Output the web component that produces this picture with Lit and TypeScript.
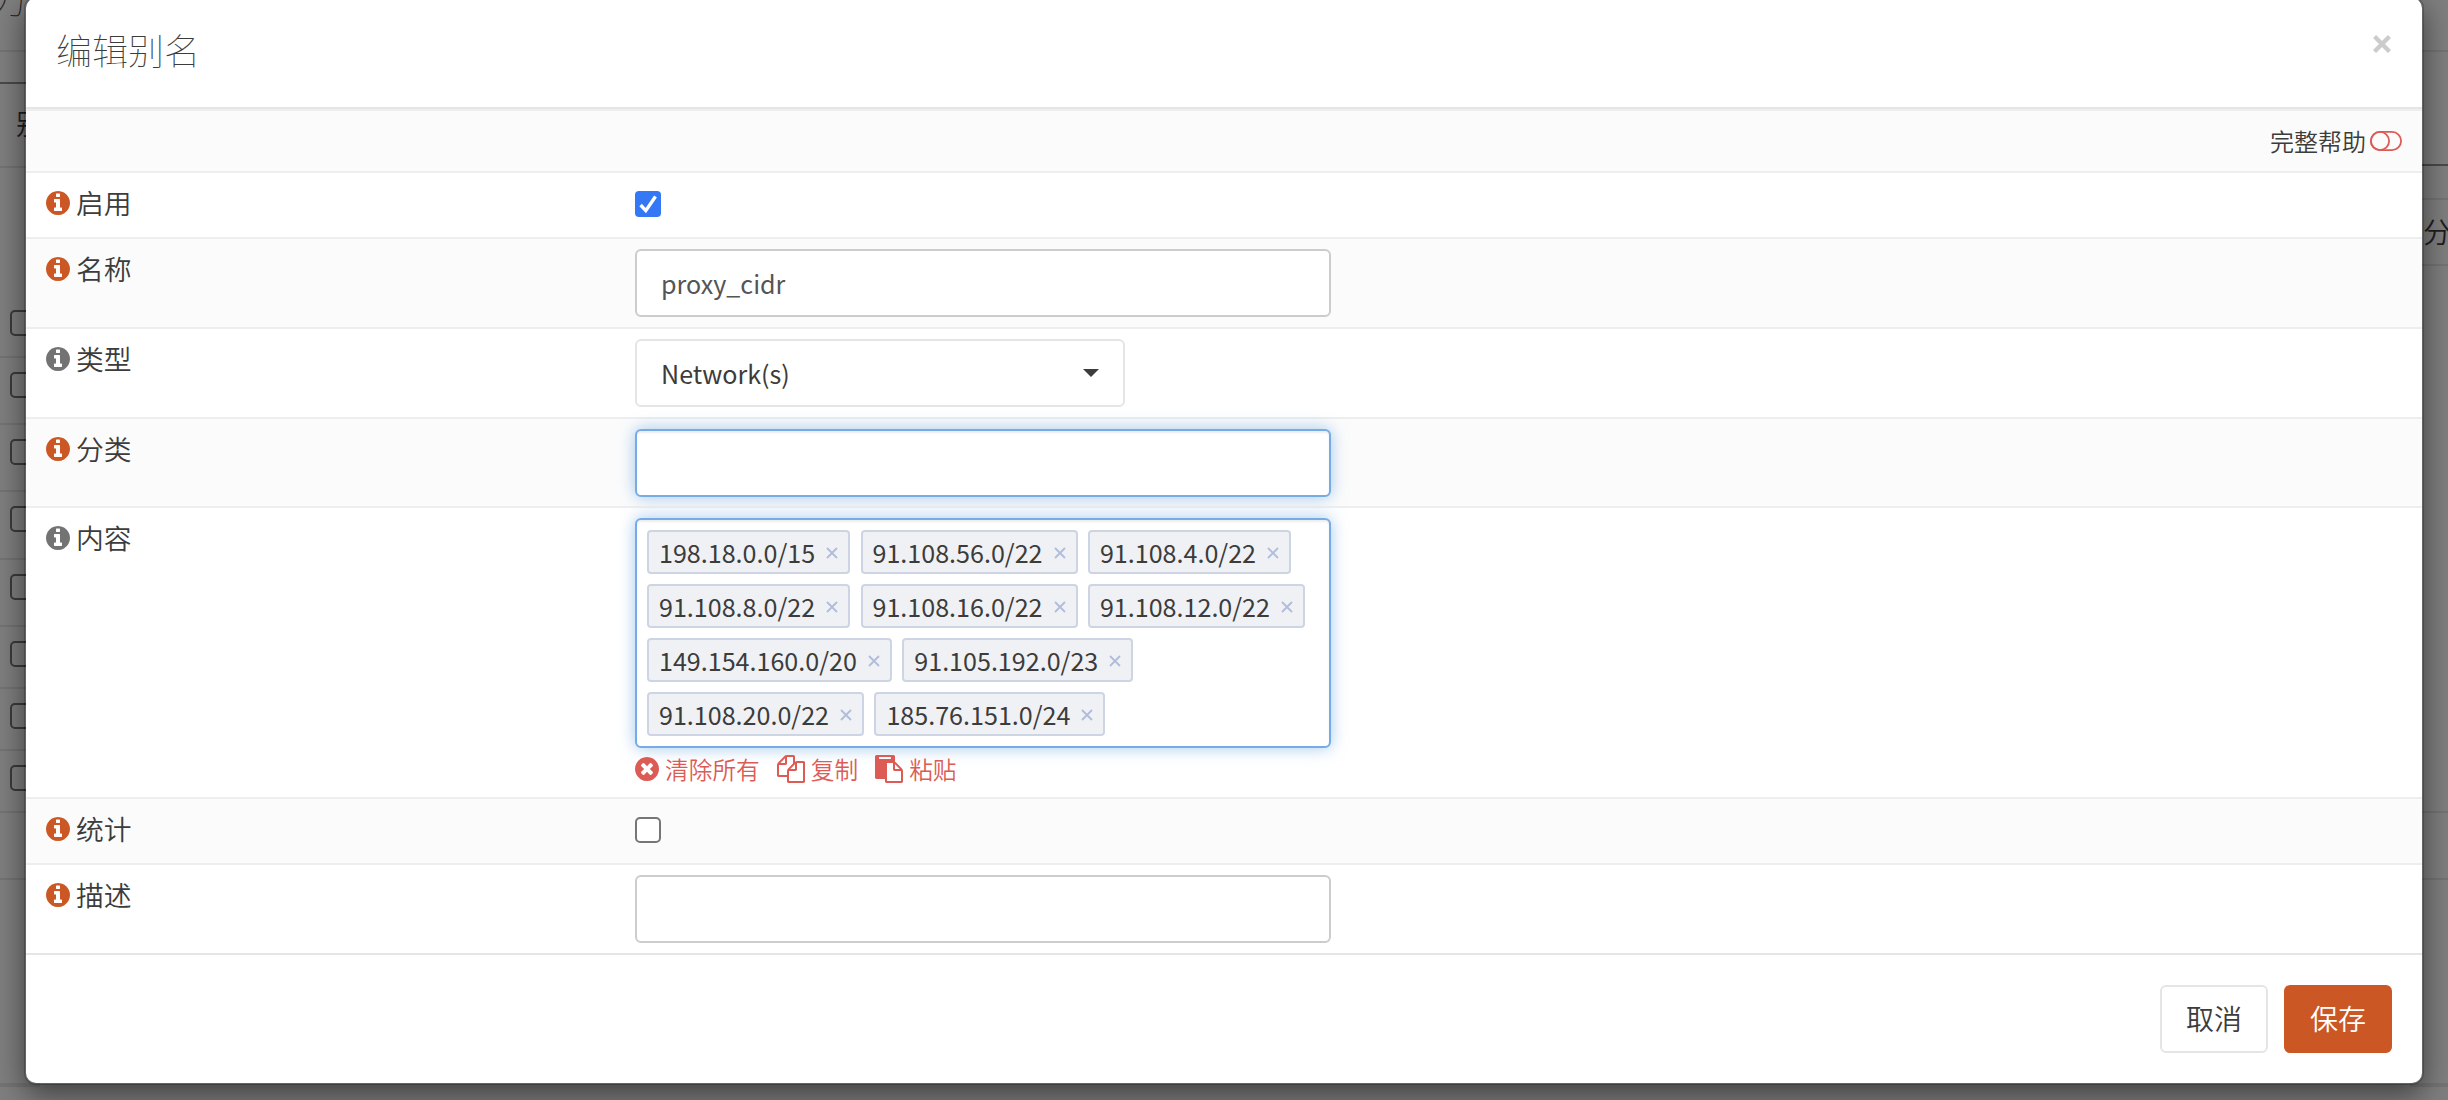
import { LitElement, html, css, svg } from "lit";
import { customElement } from "lit/decorators.js";

const ICON_PATHS: Record<string, string> = {
  info: "M1024 1376v-160q0-14-9-23t-23-9h-96v-512q0-14-9-23t-23-9h-320q-14 0-23 9t-9 23v160q0 14 9 23t23 9h96v320h-96q-14 0-23 9t-9 23v160q0 14 9 23t23 9h448q14 0 23-9t9-23zm-128-896v-160q0-14-9-23t-23-9h-192q-14 0-23 9t-9 23v160q0 14 9 23t23 9h192q14 0 23-9t9-23zm640 416q0 209-103 385.500t-279.500 279.500-385.500 103-385.500-103-279.500-279.500-103-385.500 103-385.500 279.500-279.500 385.500-103 385.500 103 279.500 279.500 103 385.500z",
  clear: "M1149 1122q0-26-19-45l-181-181 181-181q19-19 19-45 0-27-19-46l-90-90q-19-19-46-19-26 0-45 19l-181 181-181-181q-19-19-45-19-27 0-46 19l-90 90q-19 19-19 46 0 26 19 45l181 181-181 181q-19 19-19 45 0 27 19 46l90 90q19 19 46 19 26 0 45-19l181-181 181 181q19 19 45 19 27 0 46-19l90-90q19-19 19-46zm387-226q0 209-103 385.500t-279.500 279.500-385.500 103-385.500-103-279.500-279.500-103-385.500 103-385.500 279.500-279.500 385.500-103 385.500 103 279.500 279.500 103 385.500z",
  copy: "M1696 384q40 0 68 28t28 68v1216q0 40-28 68t-68 28h-960q-40 0-68-28t-28-68v-288h-544q-40 0-68-28t-28-68v-672q0-40 20-88t48-76l408-408q28-28 76-48t88-20h416q40 0 68 28t28 68v328q68-40 128-40h416zm-544 213l-299 299h299v-299zm-640-384l-299 299h299v-299zm196 647l316-316v-416h-384v416q0 40-28 68t-68 28h-416v640h512v-256q0-40 20-88t48-76zm956 804v-1152h-384v416q0 40-28 68t-68 28h-416v640h896z",
  paste: "M768 1664h896v-640h-416q-40 0-68-28t-28-68v-416h-384v1152zm256-1440v-64q0-13-9.500-22.500t-22.500-9.500h-704q-13 0-22.500 9.500t-9.500 22.500v64q0 13 9.500 22.500t22.500 9.500h704q13 0 22.500-9.500t9.500-22.500zm256 672h299l-299-299v299zm512 128v672q0 40-28 68t-68 28h-960q-40 0-68-28t-28-68v-160h-544q-40 0-68-28t-28-68v-1344q0-40 28-68t68-28h1088q40 0 68 28t28 68v328q21 13 36 28l408 408q28 28 48 76t20 88z",
};

function icon(name: string, cls: string, width = 1536) {
  const top = width === 1536 ? 128 : 0;
  const height = width === 1536 ? 1536 : 1792;
  return html`<svg class=${cls} viewBox="0 ${top} ${width} ${height}" aria-hidden="true">
    ${svg`<path fill="currentColor" d=${ICON_PATHS[name]}></path>`}
  </svg>`;
}

const NETWORKS = [
  "198.18.0.0/15",
  "91.108.56.0/22",
  "91.108.4.0/22",
  "91.108.8.0/22",
  "91.108.16.0/22",
  "91.108.12.0/22",
  "149.154.160.0/20",
  "91.105.192.0/23",
  "91.108.20.0/22",
  "185.76.151.0/24",
];

@customElement("form-row")
class FormRow extends LitElement {
  static properties = { label: {}, active: { type: Boolean } };
  declare label: string;
  declare active: boolean;

  static styles = css`
    :host {
      display: grid;
      grid-template-columns: 589px 1fr;
      align-items: start;
      box-sizing: border-box;
      border-top: 2px solid #eeeeee;
      padding: 10px 20px;
    }
    .label {
      display: flex;
      align-items: center;
      gap: 6px;
      height: 40px;
      font-size: 27.8px;
      line-height: 38px;
    }
    .text {
      padding-bottom: 3px;
    }
    .icon {
      width: 24px;
      height: 24px;
      flex: none;
      color: #737373;
    }
    .icon.on {
      color: #ca5724;
    }
  `;

  render() {
    return html`
      <div class="label">
        ${icon("info", this.active ? "icon on" : "icon")}<span class="text">${this.label}</span>
      </div>
      <div><slot></slot></div>
    `;
  }
}

@customElement("app-root")
class AppRoot extends LitElement {
  static styles = css`
    :host {
      display: block;
      position: relative;
      width: 2448px;
      height: 1100px;
      overflow: hidden;
      background: #7f7f7f;
      color: #3c3c3b;
      font-family: "Noto Sans CJK SC", sans-serif;
      font-weight: 350;
    }
    .behind {
      position: absolute;
      background: #747474;
      height: 2px;
    }
    .behind.dark {
      background: #4a4a4a;
    }
    .left {
      left: 0;
      width: 40px;
    }
    .right {
      left: 2410px;
      width: 38px;
    }
    .behind-text {
      position: absolute;
      color: #1e1e1e;
      font-size: 28px;
      line-height: 40px;
      white-space: nowrap;
    }
    .behind-box {
      position: absolute;
      left: 10px;
      width: 26px;
      height: 26px;
      box-sizing: border-box;
      border: 2px solid #3b3b3b;
      border-radius: 5px;
    }
    .modal {
      position: absolute;
      left: 24px;
      top: -4px;
      width: 2400px;
      height: 1089px;
      box-sizing: border-box;
      display: flex;
      flex-direction: column;
      background: #ffffff;
      background-clip: padding-box;
      border: 2px solid rgba(0, 0, 0, 0.2);
      border-radius: 12px;
      box-shadow: 0 10px 30px rgba(0, 0, 0, 0.5);
    }
    .header {
      display: flex;
      justify-content: space-between;
      align-items: flex-start;
      height: 111px;
      box-sizing: border-box;
      padding: 26px 30px 0 30px;
      border-bottom: 2px solid #e5e5e5;
    }
    .title {
      margin: 0;
      font-size: 36px;
      line-height: 50px;
      font-weight: 100;
    }
    .close {
      width: 18px;
      height: 18px;
      margin: 11px 1px 0 0;
      color: #cccccc;
    }
    .help {
      display: flex;
      justify-content: flex-end;
      align-items: center;
      gap: 4px;
      height: 62px;
      box-sizing: border-box;
      padding: 0 20px 0 0;
      border-top: 2px solid #eeeeee;
      background: #fbfbfb;
      font-size: 24px;
      line-height: 36px;
    }
    .help span {
      padding-bottom: 1px;
    }
    .toggle {
      width: 32px;
      height: 20px;
      color: #dd5b55;
    }
    .alt {
      background: #fbfbfb;
    }
    .h66 {
      height: 66px;
    }
    .h90 {
      height: 90px;
    }
    .h89 {
      height: 89px;
    }
    .h291 {
      height: 291px;
    }
    .input,
    .select {
      display: flex;
      align-items: center;
      box-sizing: border-box;
      width: 696px;
      height: 68px;
      padding: 0 24px 1px;
      border: 2px solid #cccccc;
      border-radius: 6px;
      background: #ffffff;
      color: #555555;
      font-size: 25.100px;
      font-weight: 400;
    }
    .focus {
      border-color: #76ace5;
      box-shadow: inset 0 2px 2px rgba(0, 0, 0, 0.075), 0 0 16px rgba(102, 163, 226, 0.6);
    }
    .select {
      justify-content: space-between;
      width: 490px;
      border-color: #e5e5e5;
      color: #3c3c3b;
    }
    .caret {
      border-top: 8px solid #3c3c3b;
      border-left: 8px solid transparent;
      border-right: 8px solid transparent;
    }
    .check {
      display: block;
      width: 26px;
      height: 26px;
      margin-top: 8px;
    }
    .tags {
      display: flex;
      flex-wrap: wrap;
      align-content: flex-start;
      gap: 10px 10.400px;
      box-sizing: border-box;
      width: 696px;
      height: 230px;
      padding: 10px;
      border: 2px solid #76ace5;
      border-radius: 6px;
      background: #ffffff;
    }
    .tag {
      display: flex;
      align-items: center;
      box-sizing: border-box;
      height: 44px;
      padding: 0 10px;
      border: 2px solid #cdd5e4;
      border-radius: 4px;
      background: #f0f1f5;
      font-size: 25.100px;
      line-height: 36px;
      font-weight: 400;
    }
    .tag span {
      padding-bottom: 1px;
    }
    .remove {
      width: 12px;
      height: 12px;
      margin: 2px 0 0 11px;
      color: #b0bcdb;
    }
    .actions {
      display: flex;
      align-items: center;
      height: 42px;
      color: #dd5b55;
      font-size: 23.700px;
      line-height: 36px;
    }
    .action {
      display: flex;
      align-items: center;
      gap: 6px;
      margin-right: 17px;
    }
    .a24 {
      width: 24px;
      height: 24px;
    }
    .a28 {
      width: 28px;
      height: 28px;
    }
    .footer {
      display: flex;
      justify-content: flex-end;
      gap: 16px;
      height: 130px;
      box-sizing: border-box;
      padding: 30px;
      border-top: 2px solid #e5e5e5;
    }
    .button {
      display: flex;
      align-items: center;
      justify-content: center;
      box-sizing: border-box;
      width: 108px;
      height: 68px;
      padding-bottom: 2px;
      border: 2px solid #e5e5e5;
      border-radius: 6px;
      font-size: 28px;
    }
    .primary {
      border-color: #ca5724;
      background: #ca5724;
      color: #ffffff;
    }
    .b1 { top: 50px; }
    .b2 { top: 82px; }
    .b3 { top: 166px; }
    .b4 { top: 356px; }
    .b5 { top: 423px; }
    .b6 { top: 490px; }
    .b7 { top: 558px; }
    .b8 { top: 625px; }
    .b9 { top: 687px; }
    .b10 { top: 749px; }
    .b11 { top: 811px; }
    .b12 { top: 878px; }
    .b13 { top: 1083px; height: 4px; }
    .r2 { top: 164px; }
    .r3 { top: 198px; }
    .r4 { top: 264px; }
    .c1 { top: 310px; }
    .c2 { top: 372px; }
    .c3 { top: 439px; }
    .c4 { top: 506px; }
    .c5 { top: 574px; }
    .c6 { top: 641px; }
    .c7 { top: 703px; }
    .c8 { top: 765px; }
    .t1 { left: -10px; top: -27px; font-size: 36px; line-height: 50px; font-weight: 100; }
    .t2 { left: 16px; top: 103px; }
    .t3 { left: 2423px; top: 211px; }
  `;

  render() {
    return html`
      <div class="behind left b1"></div>
      <div class="behind left dark b2"></div>
      ${[3, 4, 5, 6, 7, 8, 9, 10, 11, 12, 13].map((n) => html`<div class="behind left b${n}"></div>`)}
      <div class="behind right b1"></div>
      <div class="behind right dark r2"></div>
      <div class="behind right r3"></div>
      <div class="behind right r4"></div>
      <div class="behind right b11"></div>
      <div class="behind right b12"></div>
      <div class="behind right b13"></div>
      ${[1, 2, 3, 4, 5, 6, 7, 8].map((n) => html`<div class="behind-box c${n}"></div>`)}
      <div class="behind-text t1">力</div>
      <div class="behind-text t2">别</div>
      <div class="behind-text t3">分</div>

      <div class="modal">
        <div class="header">
          <h4 class="title">编辑别名</h4>
          <svg class="close" viewBox="0 0 18 18">
            <path d="M1.500 1.500L16.500 16.500M16.500 1.500L1.500 16.500" stroke="currentColor" stroke-width="4.400"></path>
          </svg>
        </div>
        <div class="help">
          <span>完整帮助</span>
          <svg class="toggle" viewBox="0 0 32 20" fill="none" stroke="currentColor" stroke-width="1.800">
            <rect x="0.900" y="0.900" width="30.200" height="18.200" rx="9.100"></rect>
            <circle cx="10" cy="10" r="9.100"></circle>
          </svg>
        </div>
        <form-row class="h66" label="启用" active>
          <svg class="check" viewBox="0 0 26 26">
            <rect width="26" height="26" rx="4" fill="#3478f6"></rect>
            <path d="M5.600 14L10.800 19.600L20.500 5.500" fill="none" stroke="#fff" stroke-width="3.400"></path>
          </svg>
        </form-row>
        <form-row class="h90 alt" label="名称" active><div class="input">proxy_cidr</div></form-row>
        <form-row class="h90" label="类型">
          <div class="select"><span>Network(s)</span><i class="caret"></i></div>
        </form-row>
        <form-row class="h89 alt" label="分类" active><div class="input focus"></div></form-row>
        <form-row class="h291" label="内容">
          <div class="tags focus">
            ${NETWORKS.map(
              (n) => html`<div class="tag">
                <span>${n}</span>
                <svg class="remove" viewBox="0 0 12 12">
                  <path d="M1 1L11 11M11 1L1 11" stroke="currentColor" stroke-width="1.800"></path>
                </svg>
              </div>`
            )}
          </div>
          <div class="actions">
            <span class="action">${icon("clear", "a24")}清除所有</span>
            <span class="action">${icon("copy", "a28", 1792)}复制</span>
            <span class="action">${icon("paste", "a28", 1792)}粘贴</span>
          </div>
        </form-row>
        <form-row class="h66 alt" label="统计" active>
          <svg class="check" viewBox="0 0 26 26">
            <rect x="1" y="1" width="24" height="24" rx="4" fill="#fff" stroke="#767676" stroke-width="2"></rect>
          </svg>
        </form-row>
        <form-row class="h90" label="描述" active><div class="input"></div></form-row>
        <div class="footer">
          <div class="button">取消</div>
          <div class="button primary">保存</div>
        </div>
      </div>
    `;
  }
}
